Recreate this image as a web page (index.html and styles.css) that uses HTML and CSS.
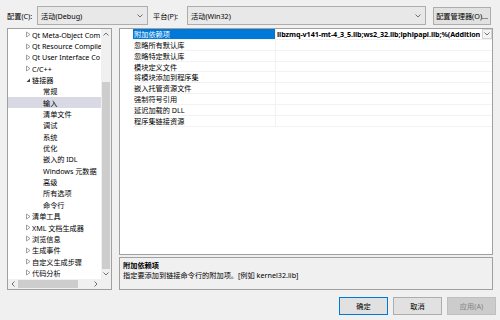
FILE: index.html
```html
<!DOCTYPE html>
<html lang="zh-CN">

<head>
  <meta charset="UTF-8">
  <meta name="viewport" content="width=device-width, initial-scale=1.0">
  <title>属性页</title>
  <link rel="stylesheet" href="styles.css">
</head>

<body>
  <div class="dialog">
    <div class="toolbar">
      <span class="label">配置(C):</span>
      <div class="combo combo-config">
        <span>活动(Debug)</span>
        <svg class="chev" width="6" height="4" viewBox="0 0 6 4"><polyline points="0.5,0.5 3,3 5.5,0.5" /></svg>
      </div>
      <span class="label label-platform">平台(P):</span>
      <div class="combo combo-platform">
        <span>活动(Win32)</span>
        <svg class="chev" width="6" height="4" viewBox="0 0 6 4"><polyline points="0.5,0.5 3,3 5.5,0.5" /></svg>
      </div>
      <div class="btn btn-manager">配置管理器(O)...</div>
    </div>

    <div class="main">
      <div class="tree">
        <div class="tree-body">
          <div class="tree-items">
            <div class="tree-row level1"><svg class="twisty" width="7" height="7" viewBox="0 0 7 7"><polygon class="closed" points="1.5,1 5,3.5 1.5,6" /></svg>Qt Meta-Object Com</div>
            <div class="tree-row level1"><svg class="twisty" width="7" height="7" viewBox="0 0 7 7"><polygon class="closed" points="1.5,1 5,3.5 1.5,6" /></svg>Qt Resource Compile</div>
            <div class="tree-row level1"><svg class="twisty" width="7" height="7" viewBox="0 0 7 7"><polygon class="closed" points="1.5,1 5,3.5 1.5,6" /></svg>Qt User Interface Co</div>
            <div class="tree-row level1"><svg class="twisty" width="7" height="7" viewBox="0 0 7 7"><polygon class="closed" points="1.5,1 5,3.5 1.5,6" /></svg>C/C++</div>
            <div class="tree-row level1"><svg class="twisty" width="7" height="7" viewBox="0 0 7 7"><polygon class="open" points="5,1.5 5,5 1.5,5" /></svg>链接器</div>
            <div class="tree-row level2">常规</div>
            <div class="tree-row level2 selected">输入</div>
            <div class="tree-row level2">清单文件</div>
            <div class="tree-row level2">调试</div>
            <div class="tree-row level2">系统</div>
            <div class="tree-row level2">优化</div>
            <div class="tree-row level2">嵌入的 IDL</div>
            <div class="tree-row level2">Windows 元数据</div>
            <div class="tree-row level2">高级</div>
            <div class="tree-row level2">所有选项</div>
            <div class="tree-row level2">命令行</div>
            <div class="tree-row level1"><svg class="twisty" width="7" height="7" viewBox="0 0 7 7"><polygon class="closed" points="1.5,1 5,3.5 1.5,6" /></svg>清单工具</div>
            <div class="tree-row level1"><svg class="twisty" width="7" height="7" viewBox="0 0 7 7"><polygon class="closed" points="1.5,1 5,3.5 1.5,6" /></svg>XML 文档生成器</div>
            <div class="tree-row level1"><svg class="twisty" width="7" height="7" viewBox="0 0 7 7"><polygon class="closed" points="1.5,1 5,3.5 1.5,6" /></svg>浏览信息</div>
            <div class="tree-row level1"><svg class="twisty" width="7" height="7" viewBox="0 0 7 7"><polygon class="closed" points="1.5,1 5,3.5 1.5,6" /></svg>生成事件</div>
            <div class="tree-row level1"><svg class="twisty" width="7" height="7" viewBox="0 0 7 7"><polygon class="closed" points="1.5,1 5,3.5 1.5,6" /></svg>自定义生成步骤</div>
            <div class="tree-row level1"><svg class="twisty" width="7" height="7" viewBox="0 0 7 7"><polygon class="closed" points="1.5,1 5,3.5 1.5,6" /></svg>代码分析</div>
          </div>
          <div class="vscroll">
            <div class="sb-arrow"><svg width="6" height="4" viewBox="0 0 6 4"><polyline points="0.5,3.5 3,1 5.5,3.5" /></svg></div>
            <div class="sb-track"><div class="vthumb"></div></div>
            <div class="sb-arrow"><svg width="6" height="4" viewBox="0 0 6 4"><polyline points="0.5,0.5 3,3 5.5,0.5" /></svg></div>
          </div>
        </div>
        <div class="hscroll-row">
          <div class="hscroll">
            <div class="sb-arrow"><svg width="4" height="6" viewBox="0 0 4 6"><polyline points="3.5,0.5 1,3 3.5,5.5" /></svg></div>
            <div class="sb-track-h"><div class="hthumb"></div></div>
            <div class="sb-arrow"><svg width="4" height="6" viewBox="0 0 4 6"><polyline points="0.5,0.5 3,3 0.5,5.5" /></svg></div>
          </div>
          <div class="corner"></div>
        </div>
      </div>

      <div class="props">
        <div class="grid">
          <div class="prop-row">
            <div class="prop-name selected">附加依赖项</div>
            <div class="prop-value">
              <span class="value-text">libzmq-v141-mt-4_3_5.lib;ws2_32.lib;iphlpapi.lib;%(Addition</span>
              <span class="drop"><svg width="6" height="4" viewBox="0 0 6 4"><polyline points="0.5,0.5 3,3 5.5,0.5" /></svg></span>
            </div>
          </div>
          <div class="prop-row"><div class="prop-name">忽略所有默认库</div><div class="prop-value"></div></div>
          <div class="prop-row"><div class="prop-name">忽略特定默认库</div><div class="prop-value"></div></div>
          <div class="prop-row"><div class="prop-name">模块定义文件</div><div class="prop-value"></div></div>
          <div class="prop-row"><div class="prop-name">将模块添加到程序集</div><div class="prop-value"></div></div>
          <div class="prop-row"><div class="prop-name">嵌入托管资源文件</div><div class="prop-value"></div></div>
          <div class="prop-row"><div class="prop-name">强制符号引用</div><div class="prop-value"></div></div>
          <div class="prop-row"><div class="prop-name">延迟加载的 DLL</div><div class="prop-value"></div></div>
          <div class="prop-row"><div class="prop-name">程序集链接资源</div><div class="prop-value"></div></div>
        </div>
        <div class="desc">
          <p class="desc-title">附加依赖项</p>
          <p>指定要添加到链接命令行的附加项。[例如 kernel32.lib]</p>
        </div>
      </div>
    </div>

    <div class="footer">
      <div class="btn btn-default">确定</div>
      <div class="btn">取消</div>
      <div class="btn btn-disabled">应用(A)</div>
    </div>
  </div>
</body>

</html>
```

FILE: styles.css
```css
* {
  margin: 0;
  padding: 0;
  box-sizing: border-box;
}

body {
  width: 500px;
  height: 320px;
  overflow: hidden;
  background-color: #f0f0f0;
  color: #000;
  font-family: "Noto Sans", "Noto Sans CJK SC", sans-serif;
  font-size: 7.2px;
}

.dialog {
  display: flex;
  flex-direction: column;
  height: 320px;
}

/* top bar */
.toolbar {
  display: flex;
  align-items: center;
  height: 28px;
  padding-left: 7px;
  padding-top: 3px;
}

.label {
  width: 30px;
  white-space: nowrap;
}

.label-platform {
  margin-left: 5px;
  width: 34px;
}

.combo {
  display: flex;
  align-items: center;
  justify-content: space-between;
  height: 19px;
  padding: 0 4px 0 3px;
  border: 1px solid #adadad;
  background-color: #e8e8e8;
}

.combo-config {
  width: 111px;
}

.combo-platform {
  width: 239px;
}

.chev polyline,
.sb-arrow polyline,
.drop polyline {
  fill: none;
  stroke: #707070;
  stroke-width: 1;
}

.btn {
  display: flex;
  align-items: center;
  justify-content: center;
  width: 49px;
  height: 18px;
  border: 1px solid #adadad;
  background-color: #e1e1e1;
  white-space: nowrap;
}

.btn-manager {
  margin-left: 7px;
  width: 58px;
}

/* main area */
.main {
  display: flex;
  gap: 7px;
  height: 262px;
  padding: 0 7px;
}

.tree {
  display: flex;
  flex-direction: column;
  flex: none;
  width: 105px;
  border: 1px solid #a0a0a0;
  background-color: #fff;
}

.tree-body {
  display: flex;
  flex: 1;
  min-height: 0;
}

.tree-items {
  flex: 1;
  min-width: 0;
  overflow: hidden;
  letter-spacing: -0.05px;
}

.tree-row {
  display: flex;
  align-items: center;
  height: 11.35px;
  white-space: nowrap;
}

.level1 {
  padding-left: 17px;
}

.level2 {
  padding-left: 35px;
}

.tree-row.selected {
  background-color: #d9d9e4;
}

.twisty {
  flex: none;
  width: 7px;
}

.twisty .closed {
  fill: none;
  stroke: #8a8a8a;
  stroke-width: 0.8;
}

.twisty .open {
  fill: #444;
}

.vscroll {
  display: flex;
  flex-direction: column;
  flex: none;
  width: 10px;
  background-color: #f0f0f0;
}

.sb-arrow {
  display: flex;
  align-items: center;
  justify-content: center;
  flex: none;
  width: 10px;
  height: 10px;
}

.sb-track {
  flex: 1;
  padding: 43px 1px 0;
}

.vthumb {
  height: 187px;
  background-color: #cdcdcd;
}

.hscroll-row {
  display: flex;
  height: 10px;
}

.hscroll {
  display: flex;
  flex: 1;
  background-color: #f0f0f0;
}

.sb-track-h {
  flex: 1;
  padding: 1px 0 1px 0;
}

.hthumb {
  width: 60px;
  height: 100%;
  background-color: #cdcdcd;
}

.corner {
  width: 10px;
  background-color: #f0f0f0;
}

/* property grid */
.props {
  display: flex;
  flex-direction: column;
  gap: 2px;
  flex: 1;
  min-width: 0;
}

.grid {
  flex: 1;
  padding-left: 13px;
  border: 1px solid #a0a0a0;
  background-color: #fff;
}

.prop-row {
  display: flex;
  height: 10.85px;
}

.prop-name {
  flex: none;
  width: 143px;
  padding-left: 1px;
  border-bottom: 1px solid #f2f2f2;
  border-right: 1px solid #f2f2f2;
  white-space: nowrap;
  line-height: 10px;
}

.prop-name.selected {
  background-color: #0078d7;
  color: #fff;
}

.prop-value {
  display: flex;
  align-items: center;
  flex: 1;
  min-width: 0;
  padding-left: 1px;
  border-bottom: 1px solid #f2f2f2;
}

.value-text {
  flex: 1;
  min-width: 0;
  overflow: hidden;
  white-space: nowrap;
  font-weight: bold;
  letter-spacing: -0.08px;
}

.drop {
  display: flex;
  align-items: center;
  justify-content: center;
  flex: none;
  width: 10px;
  height: 10px;
  border: 1px solid #d4d4d4;
  background-color: #f4f4f4;
}

.desc {
  height: 33px;
  padding: 2px 3px;
  border: 1px solid #a0a0a0;
  line-height: 10px;
}

.desc-title {
  font-weight: bold;
}

/* bottom buttons */
.footer {
  display: flex;
  justify-content: flex-end;
  gap: 5px;
  padding: 7px 4px 0 0;
}

.btn-default {
  border-color: #0078d7;
}

.btn-disabled {
  border-color: #bfbfbf;
  background-color: #cccccc;
  color: #838383;
}
```
